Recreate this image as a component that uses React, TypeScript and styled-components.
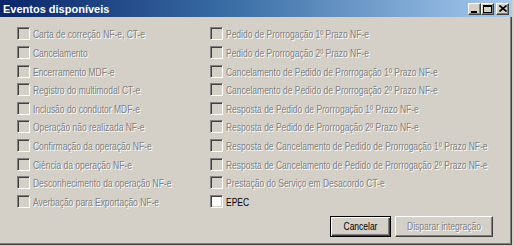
import React from "react";
import styled, { createGlobalStyle } from "styled-components";

const GlobalStyle = createGlobalStyle`
  html, body { margin: 0; padding: 0; background: #d4d0c8; }
  body { width: 514px; height: 246px; overflow: hidden; }
  * { box-sizing: border-box; }
`;

const FONT = `"Liberation Sans", Arial, sans-serif`;

const Window = styled.div`
  width: 512px;
  height: 245px;
  display: flex;
  flex-direction: column;
  font-family: ${FONT};
  font-size: 11px;
`;

const TitleBar = styled.div`
  height: 17px;
  flex: none;
  display: flex;
  align-items: center;
  padding: 0 3px 0 3px;
  background: linear-gradient(to right, #0a246a 0%, #3a6ea5 45%, #a6caf0 100%);
`;

const TitleText = styled.span`
  flex: 1;
  color: #fff;
  font-weight: bold;
  font-size: 11px;
  white-space: nowrap;
`;

const TitleButtons = styled.div`
  display: flex;
  align-items: center;
`;

const CaptionButton = styled.button<{ $gap?: boolean }>`
  width: 13px;
  height: 12px;
  padding: 0;
  margin-left: ${(p) => (p.$gap ? "2px" : "0")};
  background: #d4d0c8;
  border: 1px solid;
  border-color: #fff #404040 #404040 #fff;
  box-shadow: inset -1px -1px 0 #808080;
  display: flex;
  align-items: center;
  justify-content: center;
  svg { display: block; }
`;

const Body = styled.div`
  flex: 1;
  display: flex;
  flex-direction: column;
  border-right: 1px solid #404040;
  border-bottom: 1px solid #404040;
  box-shadow: inset -1px -1px 0 #808080;
  padding: 7.7px 18px 7px 17px;
`;

const Columns = styled.div`
  display: grid;
  grid-template-columns: 193px 1fr;
`;

const Column = styled.div`
  display: flex;
  flex-direction: column;
`;

const Row = styled.label`
  height: 18.6px;
  display: flex;
  align-items: center;
  gap: 3px;
  white-space: nowrap;
`;

const Box = styled.span<{ $disabled?: boolean }>`
  width: 13px;
  height: 13px;
  flex: none;
  border: 1px solid;
  border-color: #808080 #fff #fff #808080;
  box-shadow: inset 1px 1px 0 #404040, inset -1px -1px 0 #d4d0c8;
  background: ${(p) => (p.$disabled ? "#d4d0c8" : "#fff")};
`;

/* The reference uses a narrow, tall UI font: set the text small and stretch it vertically. */
const Narrow = styled.span`
  display: inline-block;
  font-size: 8.47px;
  line-height: 11px;
  transform: scaleY(1.3);
  transform-origin: center center;
  white-space: nowrap;
`;

const Label = styled(Narrow)<{ $disabled?: boolean }>`
  flex: none;
  color: ${(p) => (p.$disabled ? "#808080" : "#000")};
  text-shadow: ${(p) => (p.$disabled ? "1px 1px 0 #fff" : "none")};
  position: relative;
  top: 1px;
`;

const Footer = styled.div`
  margin-top: auto;
  display: flex;
  justify-content: flex-end;
  gap: 4px;
`;

const Button = styled.button<{ $w: number; $default?: boolean }>`
  width: ${(p) => p.$w}px;
  height: 21px;
  padding: 0;
  font-family: ${FONT};
  font-size: 11px;
  display: flex;
  align-items: center;
  justify-content: center;
  background: #d4d0c8;
  border: 1px solid;
  border-color: ${(p) => (p.$default ? "#000" : "#fff #404040 #404040 #fff")};
  box-shadow: ${(p) =>
    p.$default
      ? "inset 1px 1px 0 #fff, inset -1px -1px 0 #404040, inset -2px -2px 0 #808080"
      : "inset -1px -1px 0 #808080"};
  color: ${(p) => (p.disabled ? "#808080" : "#000")};
  text-shadow: ${(p) => (p.disabled ? "1px 1px 0 #fff" : "none")};
`;

const ButtonText = styled(Narrow)`
  flex: none;
`;

type Item = { label: string; enabled?: boolean };

const left: Item[] = [
  { label: "Carta de correção NF-e, CT-e" },
  { label: "Cancelamento" },
  { label: "Encerramento MDF-e" },
  { label: "Registro do multimodal CT-e" },
  { label: "Inclusão do condutor MDF-e" },
  { label: "Operação não realizada NF-e" },
  { label: "Confirmação da operação NF-e" },
  { label: "Ciência da operação NF-e" },
  { label: "Desconhecimento da operação NF-e" },
  { label: "Averbação para Exportação NF-e" },
];

const right: Item[] = [
  { label: "Pedido de Prorrogação 1º Prazo NF-e" },
  { label: "Pedido de Prorrogação 2º Prazo NF-e" },
  { label: "Cancelamento de Pedido de Prorrogação 1º Prazo NF-e" },
  { label: "Cancelamento de Pedido de Prorrogação 2º Prazo NF-e" },
  { label: "Resposta de Pedido de Prorrogação 1º Prazo NF-e" },
  { label: "Resposta de Pedido de Prorrogação 2º Prazo NF-e" },
  { label: "Resposta de Cancelamento de Pedido de Prorrogação 1º Prazo NF-e" },
  { label: "Resposta de Cancelamento de Pedido de Prorrogação 2º Prazo NF-e" },
  { label: "Prestação do Serviço em Desacordo CT-e" },
  { label: "EPEC", enabled: true },
];

const Check = ({ item }: { item: Item }) => (
  <Row>
    <Box $disabled={!item.enabled} />
    <Label $disabled={!item.enabled}>{item.label}</Label>
  </Row>
);

export default function App() {
  return (
    <>
      <GlobalStyle />
      <Window>
        <TitleBar>
          <TitleText>Eventos disponíveis</TitleText>
          <TitleButtons>
            <CaptionButton aria-label="Minimizar">
              <svg width="7" height="8" viewBox="0 0 7 8">
                <rect x="0" y="6" width="6" height="2" fill="#000" />
              </svg>
            </CaptionButton>
            <CaptionButton aria-label="Maximizar">
              <svg width="9" height="8" viewBox="0 0 9 8">
                <rect x="0.5" y="0.5" width="8" height="7" fill="none" stroke="#000" />
                <rect x="0" y="1" width="9" height="1" fill="#000" />
              </svg>
            </CaptionButton>
            <CaptionButton $gap aria-label="Fechar">
              <svg width="8" height="7" viewBox="0 0 8 7">
                <path d="M0.5 0.5 L7.5 6.5 M7.5 0.5 L0.5 6.5" stroke="#000" strokeWidth="1.6" />
              </svg>
            </CaptionButton>
          </TitleButtons>
        </TitleBar>
        <Body>
          <Columns>
            <Column>
              {left.map((it) => (
                <Check key={it.label} item={it} />
              ))}
            </Column>
            <Column>
              {right.map((it) => (
                <Check key={it.label} item={it} />
              ))}
            </Column>
          </Columns>
          <Footer>
            <Button $w={61} $default>
              <ButtonText>Cancelar</ButtonText>
            </Button>
            <Button $w={98} disabled>
              <ButtonText>Disparar integração</ButtonText>
            </Button>
          </Footer>
        </Body>
      </Window>
    </>
  );
}
